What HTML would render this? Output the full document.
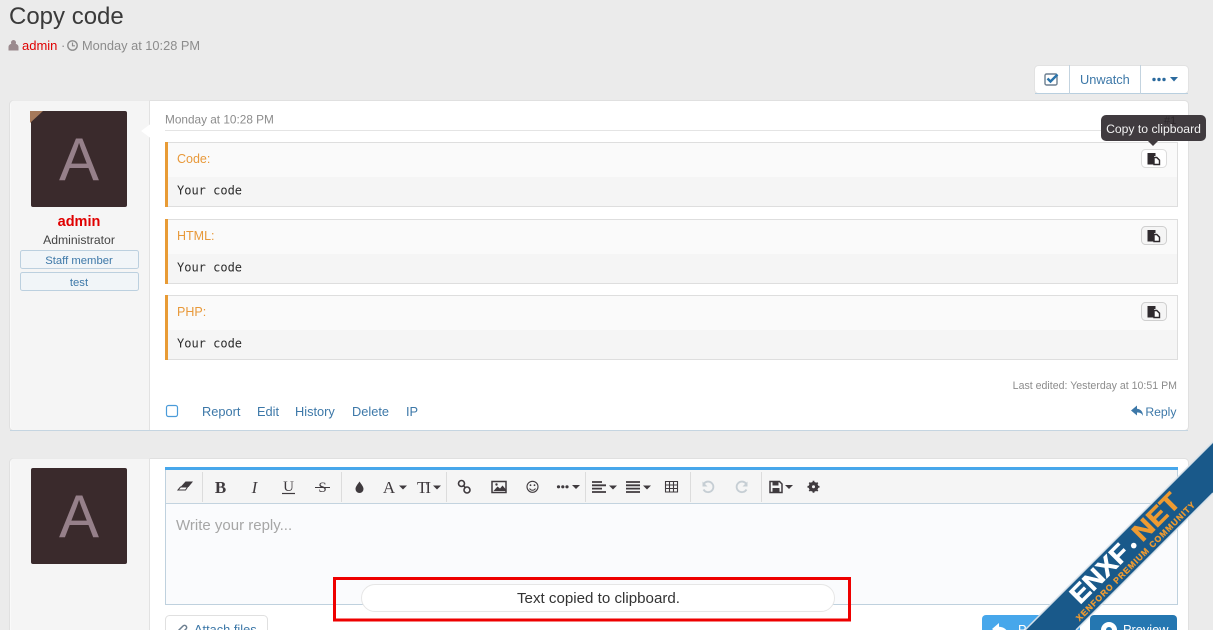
<!DOCTYPE html>
<html><head><meta charset="utf-8"><title>Copy code</title>
<style>
html,body{margin:0;padding:0;width:1213px;height:630px;overflow:hidden;background:#ebebeb}
svg{display:block}
text{font-family:"Liberation Sans",sans-serif}
.mono{font-family:"DejaVu Sans Mono","Liberation Mono",monospace;font-size:12px;fill:#2c2c2c}
.lab{font-size:12.5px;fill:#e8993a}
.act{font-size:12.800px;fill:#3d78a8}
.ic{fill:#3f3a3e}
.ln{stroke:#3f3a3e;fill:none}
.car{fill:#3f3a3e}
.sep{stroke:#dcdcdc;stroke-width:1}
.ser{font-family:"Liberation Serif",serif;font-size:17px;fill:#3f3a3e;text-anchor:middle}
</style></head><body>
<svg width="1213" height="630" viewBox="0 0 1213 630" xmlns="http://www.w3.org/2000/svg">
<rect width="1213" height="630" fill="#ebebeb"/>
<text x="9" y="24" font-size="24" fill="#3a3a3a">Copy code</text>
<path d="M13.500 40a2.500 2.500 0 0 1 2.200 3.700c1.600.6 2.800 1.600 2.800 3.300v3.500H8.500V47c0-1.700 1.200-2.700 2.800-3.300a2.500 2.500 0 0 1 2.200-3.700z" fill="#9b8a8e"/>
<text x="22" y="50" font-size="13" fill="#e00000">admin</text>
<text x="61" y="50" font-size="13" fill="#8c8c8c">·</text>
<circle cx="72.500" cy="45.500" r="4.700" fill="none" stroke="#8c8c8c" stroke-width="1.400"/>
<path d="M72.500 42.500v3.300h2.500" fill="none" stroke="#8c8c8c" stroke-width="1.200"/>
<text x="82" y="50" font-size="12.800" fill="#8c8c8c">Monday at 10:28 PM</text>

<!-- Watch buttons -->
<rect x="1034.500" y="65.500" width="154" height="28" rx="4" fill="#fff" stroke="#e2e2e2"/>
<path d="M1035 93.500h153" stroke="#b9cfdf"/>
<path d="M1069.500 65v29M1140.500 65v29" stroke="#c3d3df"/>
<rect x="1045" y="74" width="12" height="11" rx="1.500" fill="none" stroke="#6d7f90" stroke-width="1.400"/>
<path d="M1047.500 78.500l3 3 7-7" fill="none" stroke="#2b74ab" stroke-width="2.400"/>
<text x="1080" y="84" font-size="12.800" fill="#3d78a8">Unwatch</text>
<circle cx="1154" cy="79.500" r="1.700" fill="#2b6a9e"/><circle cx="1159" cy="79.500" r="1.700" fill="#2b6a9e"/><circle cx="1164" cy="79.500" r="1.700" fill="#2b6a9e"/>
<path d="M1170 77h8l-4 4.500z" fill="#2b6a9e"/>

<!-- Post card -->
<rect x="9.500" y="100.500" width="1179" height="330" rx="4" fill="#fff" stroke="#e0e0e0"/>
<path d="M10 430.500h1178" stroke="#c5d5e1"/>
<path d="M10.500 104a3.500 3.500 0 0 1 3.500-3.500H149.500V430H14a3.500 3.500 0 0 1-3.500-3.500z" fill="#f5f5f5"/>
<path d="M149.500 101v329" stroke="#e2e2e2"/>
<path d="M150.500 124l-9.500 7 9.500 7z" fill="#fff"/>
<rect x="31" y="111" width="96" height="96" rx="2" fill="#3a2a2c"/>
<path d="M30 111h13l-13 12z" fill="#a5785a"/>
<text x="79" y="180" font-size="60" fill="#96808a" text-anchor="middle">A</text>
<text x="79" y="226" font-size="14.500" font-weight="bold" fill="#e00000" text-anchor="middle">admin</text>
<text x="79" y="244" font-size="12.200" fill="#444" text-anchor="middle">Administrator</text>
<rect x="20.500" y="250.500" width="118" height="18" rx="2" fill="#f1f5f8" stroke="#bcd0df"/>
<text x="79" y="264" font-size="11.300" fill="#3d78a8" text-anchor="middle">Staff member</text>
<rect x="20.500" y="272.500" width="118" height="18" rx="2" fill="#f1f5f8" stroke="#bcd0df"/>
<text x="79" y="286" font-size="11.300" fill="#3d78a8" text-anchor="middle">test</text>

<text x="165" y="123.500" font-size="11.800" fill="#8c8c8c">Monday at 10:28 PM</text>
<path d="M165 130.500h1013" stroke="#e4e4e4"/>

<!-- Code blocks -->
<g>
<rect x="165" y="142" width="1013" height="65" fill="#f5f5f5"/><rect x="168" y="143" width="1009" height="34" fill="#fafafa"/>
<rect x="165.500" y="142.500" width="1012" height="64" fill="none" stroke="#dedede"/><rect x="165" y="142" width="3" height="65" fill="#e89b35"/>
<text x="177" y="163" class="lab">Code:</text><text x="177" y="194.500" class="mono">Your code</text>
</g>
<g>
<rect x="165" y="219" width="1013" height="65" fill="#f5f5f5"/><rect x="168" y="220" width="1009" height="34" fill="#fafafa"/>
<rect x="165.500" y="219.500" width="1012" height="64" fill="none" stroke="#dedede"/><rect x="165" y="219" width="3" height="65" fill="#e89b35"/>
<text x="177" y="240" class="lab">HTML:</text><text x="177" y="271.500" class="mono">Your code</text>
</g>
<g>
<rect x="165" y="295" width="1013" height="65" fill="#f5f5f5"/><rect x="168" y="296" width="1009" height="34" fill="#fafafa"/>
<rect x="165.500" y="295.500" width="1012" height="64" fill="none" stroke="#dedede"/><rect x="165" y="295" width="3" height="65" fill="#e89b35"/>
<text x="177" y="316" class="lab">PHP:</text><text x="177" y="347.500" class="mono">Your code</text>
</g>
<!-- copy buttons -->
<rect x="1141.500" y="149.500" width="25" height="18" rx="4" fill="#fff" stroke="#dcdcdc"/>
<path d="M1147.500 153h8v3h-1.500v8.500h-6.500z" fill="#2f2a2e"/>
<path d="M1154 157.500h2.800l2.700 2.700v4.300h-5.500z" fill="#fff" stroke="#2f2a2e" stroke-width="1.400"/>
<rect x="1141.500" y="226.500" width="25" height="18" rx="4" fill="#f5f5f5" stroke="#cfcfcf"/>
<path d="M1147.500 230h8v3h-1.500v8.500h-6.500z" fill="#2f2a2e"/>
<path d="M1154 234.500h2.800l2.700 2.700v4.300h-5.500z" fill="#fff" stroke="#2f2a2e" stroke-width="1.400"/>
<rect x="1141.500" y="302.500" width="25" height="18" rx="4" fill="#f5f5f5" stroke="#cfcfcf"/>
<path d="M1147.500 306h8v3h-1.500v8.500h-6.500z" fill="#2f2a2e"/>
<path d="M1154 310.500h2.800l2.700 2.700v4.300h-5.500z" fill="#fff" stroke="#2f2a2e" stroke-width="1.400"/>
<!-- tooltip -->
<rect x="1101" y="115" width="105" height="26" rx="5" fill="#403b3f"/>
<path d="M1148 141h10l-5 5z" fill="#403b3f"/>
<text x="1164" y="124" font-size="11" fill="#2e292d">#1</text>
<text x="1153.500" y="133" font-size="12.200" fill="#f2f2f2" text-anchor="middle">Copy to clipboard</text>

<text x="1177" y="389" font-size="10.600" fill="#8c8c8c" text-anchor="end">Last edited: Yesterday at 10:51 PM</text>
<rect x="166.500" y="405.500" width="11" height="11" rx="2" fill="#fff" stroke="#4a9bd9" stroke-width="1.200"/>
<text x="202" y="416" class="act">Report</text>
<text x="257" y="416" class="act">Edit</text>
<text x="295" y="416" class="act">History</text>
<text x="352" y="416" class="act">Delete</text>
<text x="406" y="416" class="act">IP</text>
<path d="M1137 405.500l-6 5 6 5v-3c3 0 5 .8 6 3.500 0-4-2-7-6-7.300z" fill="#3d78a8"/>
<text x="1176.500" y="416" class="act" text-anchor="end" style="font-size:12.200px">Reply</text>

<!-- Reply card -->
<rect x="9.500" y="458.500" width="1179" height="180" rx="4" fill="#fff" stroke="#e0e0e0"/>
<path d="M10.500 462a3.500 3.500 0 0 1 3.500-3.500H149.500V640H10.500z" fill="#f5f5f5"/>
<path d="M149.500 459v181" stroke="#e2e2e2"/>
<rect x="31" y="468" width="96" height="96" rx="2" fill="#3a2a2c"/>
<text x="79" y="537" font-size="60" fill="#96808a" text-anchor="middle">A</text>

<rect x="165.500" y="467.500" width="1012" height="137" fill="#fafbfd" stroke="#bfd1de"/>
<rect x="166" y="470" width="1011" height="33" fill="#f5f5f5"/>
<rect x="165" y="467" width="1013" height="3" fill="#47a7eb"/>
<path d="M166 503.500h1011" stroke="#c3d3df"/>
<text x="176" y="530" font-size="15" fill="#a6a6a6">Write your reply...</text>

<!-- Toolbar -->
<path d="M202.500 472v30M341.500 472v30M446.500 472v30M585.500 472v30M690.500 472v30M761.500 472v30" class="sep"/>
<path d="M181 486.500l4.500-5h7.500l-4.500 5.500z" class="ic"/><path d="M180.500 487l-2.500 3h7.500l2-3z" fill="#fff" stroke="#3f3a3e"/>
<text x="220.500" y="493" class="ser" font-weight="bold">B</text>
<text x="254.500" y="493" class="ser" font-style="italic">I</text>
<text x="288.500" y="491" class="ser" style="font-size:15px">U</text><path d="M282 493.500h13" stroke="#3f3a3e" stroke-width="1.200"/>
<text x="322.500" y="492" class="ser" style="font-size:15px">S</text><path d="M315 487.500h15" stroke="#3f3a3e"/>
<path d="M359.500 481.500c2 3 4 5 4 7.500a4 4 0 0 1-8 0c0-2.500 2-4.500 4-7.500z" class="ic"/>
<text x="389" y="493" class="ser" style="font-size:17px">A</text><path d="M399 485.500h8l-4 4z" class="car"/>
<text x="424" y="493" class="ser" style="font-size:17px" textLength="14">TI</text><path d="M433 485.500h8l-4 4z" class="car"/>
<g class="ln" stroke-width="1.600"><circle cx="461.500" cy="483.500" r="3"/><circle cx="467" cy="490" r="3"/><path d="M463.500 485.500l2 2.500"/></g>
<rect x="492" y="481.500" width="14" height="11" fill="none" stroke="#3f3a3e" stroke-width="1.500"/><path d="M493.500 491l4-4.500 2.500 2 2.500-3 3 3.500v2z" class="ic"/><circle cx="496.500" cy="484.500" r="1.200" fill="#3f3a3e"/>
<circle cx="532.500" cy="486.800" r="5.500" fill="none" stroke="#3f3a3e" stroke-width="1.100"/><circle cx="530.500" cy="485.200" r=".9" class="ic"/><circle cx="534.500" cy="485.200" r=".9" class="ic"/><path d="M529.500 488.500c1.500 2.300 4.500 2.300 6 0" fill="none" stroke="#3f3a3e"/>
<circle cx="558.500" cy="486.800" r="1.600" class="ic"/><circle cx="562.800" cy="486.800" r="1.600" class="ic"/><circle cx="567" cy="486.800" r="1.600" class="ic"/><path d="M572 485h8l-4 4z" class="car"/>
<path d="M592 482h10M592 485.300h14M592 488.600h10M592 492h14" stroke="#3f3a3e" stroke-width="1.800"/><path d="M609 485.500h8l-4 4z" class="car"/>
<path d="M626 482h14M626 485.300h14M626 488.600h14M626 492h14" stroke="#3f3a3e" stroke-width="1.800"/><path d="M643 485.500h8l-4 4z" class="car"/>
<path d="M665.500 481.500h12v10.500h-12zM665.500 485h12M665.500 488.500h12M669.500 481.500v10.500M673.500 481.500v10.500" fill="none" stroke="#3f3a3e" stroke-width="1.100"/>
<path d="M704 483.500a5.300 5.300 0 1 1-.5 6" fill="none" stroke="#c6ced4" stroke-width="1.800"/><path d="M702.500 481.500v5h5z" fill="#c6ced4"/>
<path d="M746 483.500a5.300 5.300 0 1 0 .5 6" fill="none" stroke="#c6ced4" stroke-width="1.800"/><path d="M747.500 481.500v5h-5z" fill="#c6ced4"/>
<path d="M770 481.500h9.500l2.500 2.500v8.500h-12z" fill="none" stroke="#3f3a3e" stroke-width="1.500"/><rect x="772.500" y="482" width="6" height="3.500" class="ic"/><rect x="772.500" y="488" width="7" height="4" class="ic"/>
<path d="M785 485h8l-4 4z" class="car"/>
<circle cx="813.500" cy="486.800" r="3.700" fill="none" stroke="#3f3a3e" stroke-width="2.400"/><path d="M813.500 480.800v12M807.500 486.800h12M809.300 482.600l8.400 8.400M817.700 482.600l-8.400 8.400" stroke="#3f3a3e" stroke-width="1.800"/><circle cx="813.500" cy="486.800" r="1.500" fill="#f5f5f5"/>

<!-- Bottom buttons -->
<rect x="165.500" y="615.500" width="102" height="30" rx="4" fill="#fff" stroke="#e0e0e0"/>
<path d="M177 632l6-6c2-2 5 1 3 3l-6 6" fill="none" stroke="#6d7f90" stroke-width="1.500"/>
<text x="194" y="634" font-size="12.800" fill="#3d78a8">Attach files</text>
<rect x="982" y="615" width="98" height="30" rx="4" fill="#47a7eb"/>
<path d="M999 623l-7 6 7 6v-3c4 0 7 .8 9 3.500 0-5-3-8.500-9-8.800z" fill="#fff"/>
<text x="1018" y="634" font-size="12.800" fill="#fff">Post reply</text>
<rect x="1090" y="615" width="87" height="30" rx="4" fill="#2577b1"/>
<circle cx="1109" cy="630" r="8" fill="#fff"/><circle cx="1109" cy="630" r="3" fill="#2577b1"/>
<text x="1123" y="634" font-size="12.800" fill="#fff">Preview</text>

<!-- Notice -->
<rect x="361.500" y="584.500" width="473" height="27" rx="13.500" fill="#fff" stroke="#e6e6e6"/>
<text x="598.500" y="603" font-size="15" fill="#333" text-anchor="middle" textLength="163" lengthAdjust="spacingAndGlyphs">Text copied to clipboard.</text>
<rect x="334.500" y="578.500" width="515" height="41.500" fill="none" stroke="#ee0000" stroke-width="3"/>

<!-- Ribbon -->
<path d="M1213 442v51l-137 137h-51z" fill="#19598a"/>
<path d="M1213 442l-188 188M1213 493l-137 137" stroke="#d6e0e8" stroke-width="1.500" fill="none"/>
<g transform="translate(1080 605) rotate(-45)">
<text x="0" y="0" font-size="25" font-weight="bold" fill="#fff" stroke="#fff" stroke-width=".6" textLength="72" lengthAdjust="spacingAndGlyphs">ENXF</text>
<circle cx="80" cy="-4" r="2.800" fill="#fff"/>
<text x="88" y="0" font-size="25" font-weight="bold" fill="#ee9b32" stroke="#ee9b32" stroke-width=".6" textLength="56" lengthAdjust="spacingAndGlyphs">NET</text>
</g>
<g transform="translate(1079.500 621.500) rotate(-45)">
<text x="0" y="0" font-size="8.500" font-weight="bold" fill="#ee9b32" stroke="#ee9b32" stroke-width=".3" textLength="164">XENFORO PREMIUM COMMUNITY</text>
</g>
</svg>
</body></html>
